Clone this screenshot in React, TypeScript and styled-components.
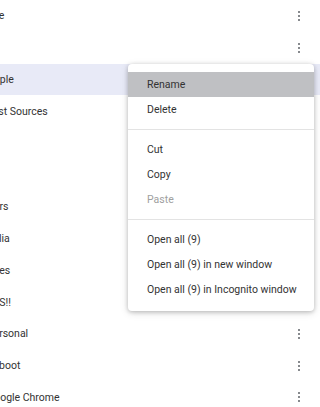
import React from 'react';
import styled, { createGlobalStyle } from 'styled-components';

const GlobalStyle = createGlobalStyle`
  html, body {
    margin: 0;
    padding: 0;
    background: #ffffff;
  }
  body {
    font-family: Roboto, "Liberation Sans", Arial, sans-serif;
  }
`;

const Page = styled.div`
  position: relative;
  width: 320px;
  height: 407px;
  overflow: hidden;
  background: #ffffff;
`;

// the folder list is scrolled a little to the left, so names are clipped
const List = styled.div`
  display: flex;
  flex-direction: column;
  margin-left: -13px;
`;

const Row = styled.div<{ $selected?: boolean }>`
  display: flex;
  align-items: center;
  height: 31.8px;
  padding-right: 16px;
  background: ${({ $selected }) => ($selected ? '#e8eaf7' : 'transparent')};
`;

const Label = styled.span`
  flex: 1;
  font-size: 10.5px;
  color: #333333;
  white-space: nowrap;
`;

const Kebab = styled.button`
  display: flex;
  flex-direction: column;
  align-items: center;
  gap: 2px;
  width: 10px;
  padding: 0;
  border: 0;
  background: none;
`;

const Dot = styled.span`
  width: 2px;
  height: 2px;
  border-radius: 50%;
  background: #5f6368;
`;

const Menu = styled.div`
  position: absolute;
  top: 64px;
  left: 128px;
  width: 186px;
  padding: 8px 0 9px;
  background: #ffffff;
  border-radius: 4px;
  box-shadow: 0 1px 4px rgba(0, 0, 0, 0.22), 0 2px 8px rgba(0, 0, 0, 0.12);
`;

const Item = styled.div<{ $active?: boolean; $disabled?: boolean }>`
  display: flex;
  align-items: center;
  height: 25px;
  padding-left: 19px;
  font-size: 10.5px;
  color: ${({ $disabled }) => ($disabled ? '#a0a0a0' : '#333333')};
  background: ${({ $active }) => ($active ? '#bfc0c3' : 'transparent')};
  white-space: nowrap;
`;

const Separator = styled.div`
  height: 1px;
  margin: 7px 0;
  background: #e3e3e3;
`;

const folders = [
  'Fire',
  'IT',
  'Apple',
  'Test Sources',
  'UI',
  'JS',
  'Cars',
  'Italia',
  'Sites',
  'YES!!',
  'Personal',
  'Reboot',
  'Google Chrome',
];

const MoreButton = () => (
  <Kebab aria-label="More actions">
    <Dot />
    <Dot />
    <Dot />
  </Kebab>
);

export default function App() {
  return (
    <>
      <GlobalStyle />
      <Page>
        <List>
          {folders.map((name, i) => (
            <Row key={name} $selected={i === 2}>
              <Label>{name}</Label>
              <MoreButton />
            </Row>
          ))}
        </List>

        <Menu role="menu">
          <Item $active>Rename</Item>
          <Item>Delete</Item>
          <Separator />
          <Item>Cut</Item>
          <Item>Copy</Item>
          <Item $disabled>Paste</Item>
          <Separator />
          <Item>Open all (9)</Item>
          <Item>Open all (9) in new window</Item>
          <Item>Open all (9) in Incognito window</Item>
        </Menu>
      </Page>
    </>
  );
}
